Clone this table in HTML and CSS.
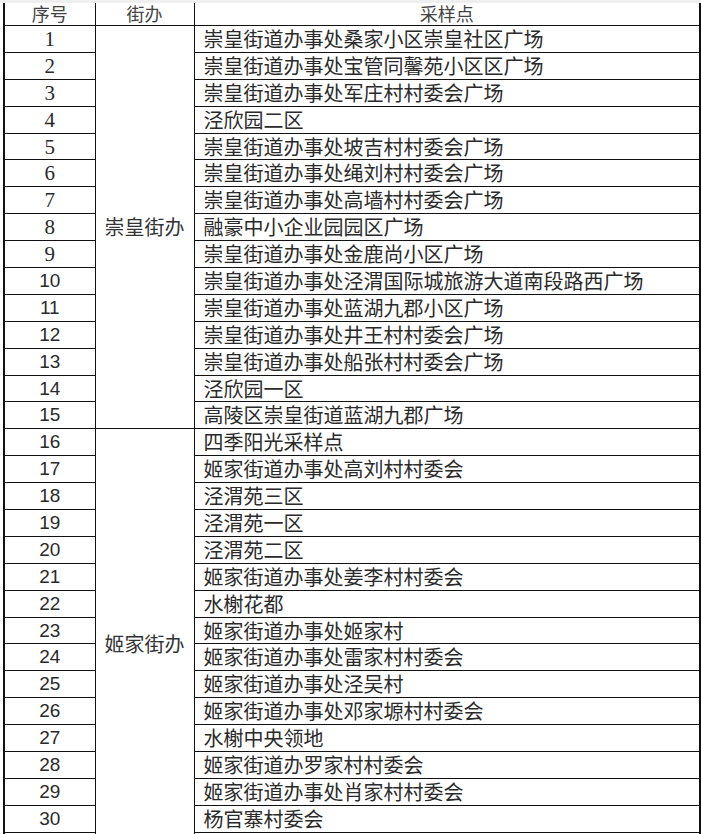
FILE: index.html
```html
<!DOCTYPE html>
<html lang="zh">
<head>
<meta charset="utf-8">
<title>采样点</title>
<link rel="stylesheet" href="styles.css">
</head>
<body>
<div class="strip"></div>
<table class="sheet">
<colgroup><col class="c1"><col class="c2"><col class="c3"></colgroup>
<thead>
<tr class="head"><th>序号</th><th>街办</th><th>采样点</th></tr>
</thead>
<tbody>
<tr><td class="num">1</td><td class="area" rowspan="15">崇皇街办</td><td class="site">崇皇街道办事处桑家小区崇皇社区广场</td></tr>
<tr><td class="num">2</td><td class="site">崇皇街道办事处宝管同馨苑小区区广场</td></tr>
<tr><td class="num">3</td><td class="site">崇皇街道办事处军庄村村委会广场</td></tr>
<tr><td class="num">4</td><td class="site">泾欣园二区</td></tr>
<tr><td class="num">5</td><td class="site">崇皇街道办事处坡吉村村委会广场</td></tr>
<tr><td class="num">6</td><td class="site">崇皇街道办事处绳刘村村委会广场</td></tr>
<tr><td class="num">7</td><td class="site">崇皇街道办事处高墙村村委会广场</td></tr>
<tr><td class="num">8</td><td class="site">融豪中小企业园园区广场</td></tr>
<tr><td class="num">9</td><td class="site">崇皇街道办事处金鹿尚小区广场</td></tr>
<tr><td class="num sans">10</td><td class="site">崇皇街道办事处泾渭国际城旅游大道南段路西广场</td></tr>
<tr><td class="num sans">11</td><td class="site">崇皇街道办事处蓝湖九郡小区广场</td></tr>
<tr><td class="num sans">12</td><td class="site">崇皇街道办事处井王村村委会广场</td></tr>
<tr><td class="num sans">13</td><td class="site">崇皇街道办事处船张村村委会广场</td></tr>
<tr><td class="num sans">14</td><td class="site">泾欣园一区</td></tr>
<tr><td class="num sans">15</td><td class="site">高陵区崇皇街道蓝湖九郡广场</td></tr>
<tr><td class="num sans">16</td><td class="area" rowspan="16">姬家街办</td><td class="site">四季阳光采样点</td></tr>
<tr><td class="num sans">17</td><td class="site">姬家街道办事处高刘村村委会</td></tr>
<tr><td class="num sans">18</td><td class="site">泾渭苑三区</td></tr>
<tr><td class="num sans">19</td><td class="site">泾渭苑一区</td></tr>
<tr><td class="num sans">20</td><td class="site">泾渭苑二区</td></tr>
<tr><td class="num sans">21</td><td class="site">姬家街道办事处姜李村村委会</td></tr>
<tr><td class="num sans">22</td><td class="site">水榭花都</td></tr>
<tr><td class="num sans">23</td><td class="site">姬家街道办事处姬家村</td></tr>
<tr><td class="num sans">24</td><td class="site">姬家街道办事处雷家村村委会</td></tr>
<tr><td class="num sans">25</td><td class="site">姬家街道办事处泾吴村</td></tr>
<tr><td class="num sans">26</td><td class="site">姬家街道办事处邓家塬村村委会</td></tr>
<tr><td class="num sans">27</td><td class="site">水榭中央领地</td></tr>
<tr><td class="num sans">28</td><td class="site">姬家街道办罗家村村委会</td></tr>
<tr><td class="num sans">29</td><td class="site">姬家街道办事处肖家村村委会</td></tr>
<tr><td class="num sans">30</td><td class="site">杨官寨村委会</td></tr>
<tr><td class="num sans"></td><td class="site"></td></tr>
</tbody>
</table>
</body>
</html>
```
FILE: styles.css
```css
html, body {
  margin: 0;
  padding: 0;
  background: #ffffff;
  overflow: hidden;
}
.strip {
  height: 3px;
  background: #efefef;
}
.sheet {
  border-collapse: collapse;
  table-layout: fixed;
  width: 696px;
  margin-left: 3px;
  font-family: "Noto Sans CJK SC", sans-serif;
  font-size: 20px;
  color: #2a2a2a;
}
.c1 { width: 91px; }
.c2 { width: 99px; }
.c3 { width: 506px; }
.sheet th, .sheet td {
  border: 1px solid #111;
  padding: 0;
  line-height: 20px;
  font-weight: normal;
  vertical-align: middle;
}
.sheet th:first-child, .sheet td:first-child { border-left: 2px solid #111; }
.sheet th:last-child, .sheet td.site { border-right: 2px solid #111; }
.head th {
  border-top: none;
  height: 20px;
  line-height: 20px;
  padding-bottom: 2px;
  font-size: 18px;
  text-align: center;
  color: #444;
}
.sheet tbody tr { height: 26.9px; }
.num {
  text-align: center;
  font-family: "Liberation Serif", serif;
  font-size: 21px;
}
.num.sans {
  font-family: "Liberation Sans", sans-serif;
  font-size: 19px;
}
.area {
  text-align: center;
  color: #333;
}
.site {
  text-align: left;
  padding-left: 9px !important;
  white-space: nowrap;
}
```
